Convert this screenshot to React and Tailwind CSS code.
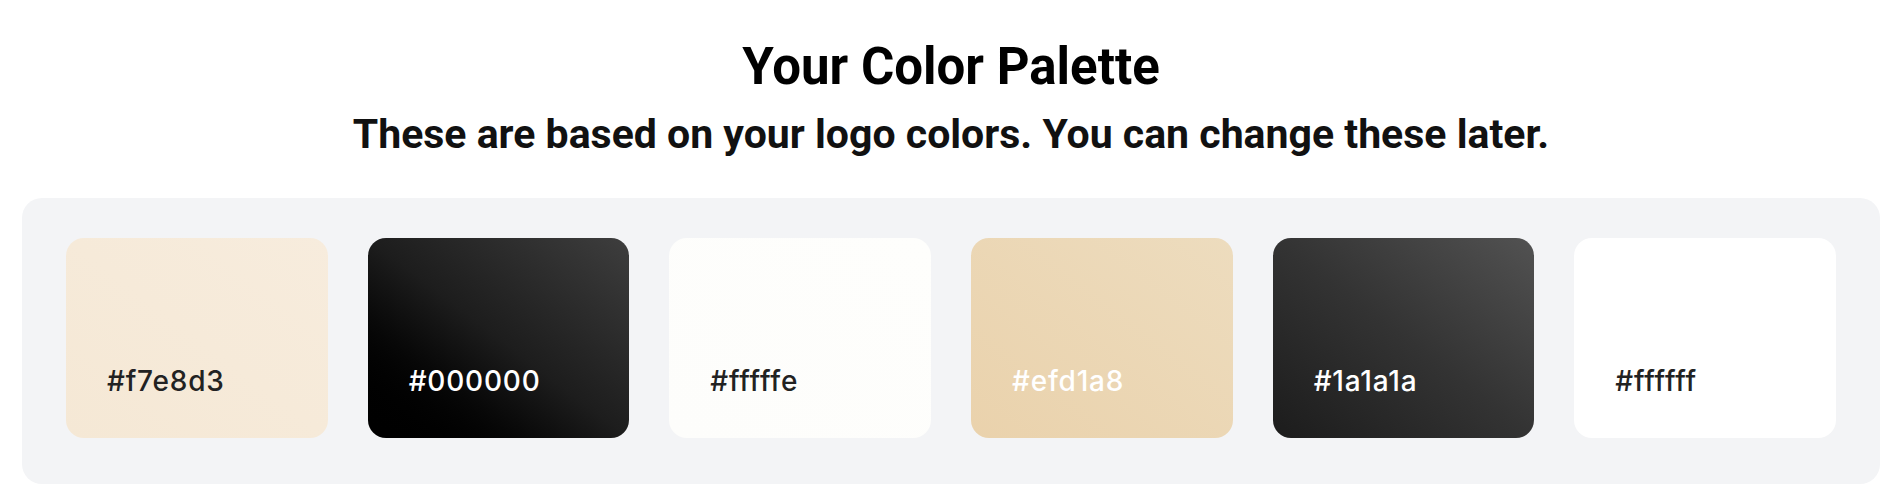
import React from "react";

const swatches = [
  { hex: "#f7e8d3", cls: "bg-linear-to-tr from-[#f5e8d5] to-[#f7ecdd]", text: "text-[#222222]" },
  { hex: "#000000", cls: "bg-linear-to-tr from-[#000000] via-[#1d1d1d] to-[#3e3e3e]", text: "text-white" },
  { hex: "#fffffe", cls: "bg-linear-to-tr from-[#fdfdfb] to-[#fefefc]", text: "text-[#222222]" },
  { hex: "#efd1a8", cls: "bg-linear-to-tr from-[#ead2ac] to-[#eddcbe]", text: "text-white" },
  { hex: "#1a1a1a", cls: "bg-linear-to-tr from-[#1c1c1c] via-[#333333] to-[#525252]", text: "text-white" },
  { hex: "#ffffff", cls: "bg-white", text: "text-[#222222]" },
];

export default function App() {
  return (
    <div className="min-h-screen bg-white pl-[22px] pr-[8px] pt-[41px] font-['Roboto',sans-serif]">
      <h1 className="text-center text-[51px] font-bold leading-none text-black">
        Your Color Palette
      </h1>
      <h2 className="mt-[22px] text-center text-[41px] font-bold leading-none text-[#111111]">
        These are based on your logo colors. You can change these later.
      </h2>
      <div className="mt-[43px] rounded-[20px] bg-[#f3f4f6] px-[44px] pt-[40px] pb-[46px]">
        <div className="grid grid-cols-6 gap-[40px]">
          {swatches.map((s) => (
            <div
              key={s.hex}
              className={`flex h-[200px] flex-col justify-end rounded-[18px] px-[41px] pb-[43px] ${s.cls}`}
            >
              <span
                className={`font-['Inter',sans-serif] text-[28px] font-medium leading-none tracking-[0.8px] ${s.text}`}
              >
                {s.hex}
              </span>
            </div>
          ))}
        </div>
      </div>
    </div>
  );
}
